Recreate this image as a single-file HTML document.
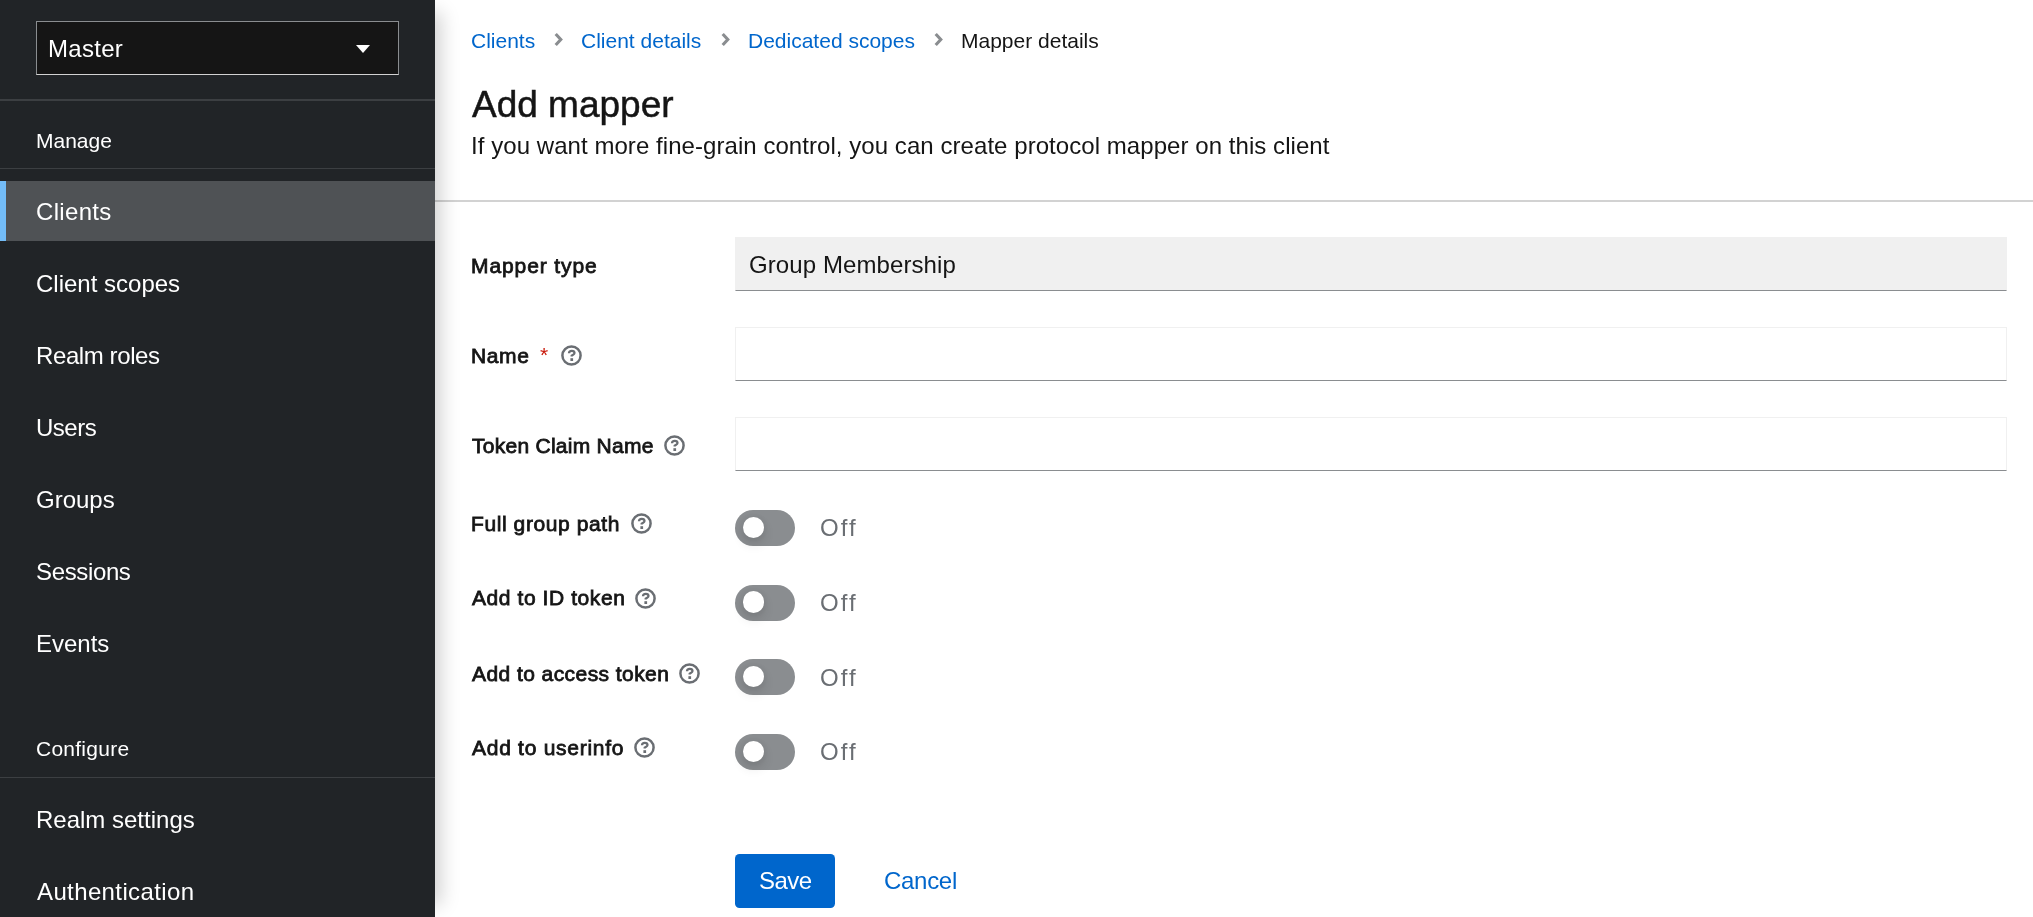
<!DOCTYPE html>
<html><head><meta charset="utf-8">
<style>
*{box-sizing:border-box;margin:0;padding:0}
html,body{width:2033px;height:917px;overflow:hidden;background:#fff;font-family:"Liberation Sans",sans-serif;color:#151515}
.t,.nav,.sec,.bc,.lbl,.off{will-change:transform}
.t{position:absolute;white-space:nowrap}
#side{position:absolute;left:0;top:0;width:435px;height:917px;background:#212427;z-index:2;box-shadow:18px 0 18px -12px rgba(3,3,3,.18)}
#realm{position:absolute;left:36px;top:21px;width:363px;height:54px;background:#151515;border:1.5px solid #8a8d90;border-bottom-color:#d2d2d2}
#caret{position:absolute;left:356px;top:45px;width:0;height:0;border-left:7px solid transparent;border-right:7px solid transparent;border-top:8px solid #fff}
.hr{position:absolute;left:0;width:435px;height:1.5px;background:#3c3f42}
.nav{position:absolute;left:36px;font-size:24px;color:#fff;line-height:24px;white-space:nowrap}
.sec{position:absolute;left:36px;font-size:21px;color:#fff;line-height:21px;white-space:nowrap}
#active{position:absolute;left:0;top:181px;width:435px;height:60px;background:#4f5255}
#active::before{content:"";position:absolute;left:0;top:0;width:6px;height:60px;background:#73bcf7}
.bc{position:absolute;top:30px;font-size:21px;color:#0066cc;line-height:21px;white-space:nowrap}
.chev{position:absolute;top:28px;width:20px;height:24px}
.lbl{position:absolute;left:471px;font-size:21px;color:#151515;line-height:21px;white-space:nowrap;-webkit-text-stroke:0.8px #151515}
.inp{position:absolute;left:735px;width:1272px;height:54px;border:1.5px solid #f0f0f0;border-bottom:1.5px solid #8a8d90;background:#fff}
.help{position:absolute;width:21px;height:21px}
.sw{position:absolute;left:735px;width:60px;height:36px;border-radius:18px;background:#8a8d90}
.sw::after{content:"";position:absolute;left:7.5px;top:6.5px;width:21.5px;height:21.5px;border-radius:50%;background:#fff;box-shadow:0 6px 12px rgba(3,3,3,.12),0 0 6px rgba(3,3,3,.06)}
.off{position:absolute;left:820px;letter-spacing:2px;font-size:24px;color:#6a6e73;line-height:24px;white-space:nowrap}
</style></head><body>
<svg width="0" height="0" style="position:absolute">
<defs>
<symbol id="q" viewBox="0 0 21 21"><circle cx="10.5" cy="10.5" r="9.1" fill="none" stroke="#6a6e73" stroke-width="2.5"/><path d="M8,8.3 C8,6.6 9.1,5.9 10.8,5.9 C12.5,5.9 13.5,6.8 13.5,8.1 C13.5,9.6 11.6,9.9 10.7,10.7 V11.6" fill="none" stroke="#6a6e73" stroke-width="2.3"/><rect x="9.4" y="13.2" width="2.7" height="2.8" fill="#6a6e73"/></symbol>
<symbol id="cv" viewBox="0 0 20 24"><path d="M5.7,6 L10.8,11.5 L5.7,17" fill="none" stroke="#8a8d90" stroke-width="3.1"/></symbol>
</defs></svg>
<div id="side">
  <div id="realm"></div>
  <div class="nav" style="left:48px;top:37px;letter-spacing:.3px">Master</div>
  <div id="caret"></div>
  <div class="hr" style="top:99px;height:2px"></div>
  <div class="sec" style="top:130px">Manage</div>
  <div class="hr" style="top:168px;height:1px"></div>
  <div id="active"></div>
  <div class="nav" style="top:200px;letter-spacing:.33px">Clients</div>
  <div class="nav" style="top:272px">Client scopes</div>
  <div class="nav" style="top:344px;letter-spacing:-.4px">Realm roles</div>
  <div class="nav" style="top:416px;letter-spacing:-.5px">Users</div>
  <div class="nav" style="top:488px">Groups</div>
  <div class="nav" style="top:560px;letter-spacing:-.36px">Sessions</div>
  <div class="nav" style="top:632px">Events</div>
  <div class="sec" style="top:738px;letter-spacing:.25px">Configure</div>
  <div class="hr" style="top:777px;height:1px"></div>
  <div class="nav" style="top:808px">Realm settings</div>
  <div class="nav" style="top:880px;left:37px;letter-spacing:.38px">Authentication</div>
</div>
<div id="main">
  <div class="bc" style="left:471px">Clients</div>
  <svg class="chev" style="left:550px"><use href="#cv"/></svg>
  <div class="bc" style="left:581px">Client details</div>
  <svg class="chev" style="left:717px"><use href="#cv"/></svg>
  <div class="bc" style="left:748px">Dedicated scopes</div>
  <svg class="chev" style="left:930px"><use href="#cv"/></svg>
  <div class="bc" style="left:961px;color:#151515">Mapper details</div>
  <div class="t" style="left:472px;top:86px;font-size:37px;line-height:37px;-webkit-text-stroke:0.5px #151515">Add mapper</div>
  <div class="t" style="left:471px;top:134px;font-size:24px;line-height:24px;letter-spacing:.057px">If you want more fine-grain control, you can create protocol mapper on this client</div>
  <div class="t" style="left:435px;top:199.5px;width:1598px;height:1.5px;background:#d2d2d2"></div>

  <div class="lbl" style="top:255px;letter-spacing:0.9px;left:471px">Mapper type</div>
  <div class="inp" style="top:237px;background:#f0f0f0;border-color:#f0f0f0;border-bottom-color:#8a8d90"></div>
  <div class="t" style="left:749px;top:253px;font-size:24px;line-height:24px;color:#151515;letter-spacing:.09px">Group Membership</div>

  <div class="lbl" style="top:345px;letter-spacing:0.6px;left:471px">Name</div>
  <div class="t" style="left:540px;top:344px;font-size:21px;line-height:21px;color:#c9190b">*</div>
  <svg class="help" style="left:561px;top:345px"><use href="#q"/></svg>
  <div class="inp" style="top:327px"></div>

  <div class="lbl" style="top:435px;letter-spacing:0.27px;left:472px">Token Claim Name</div>
  <svg class="help" style="left:664px;top:435px"><use href="#q"/></svg>
  <div class="inp" style="top:417px"></div>

  <div class="lbl" style="top:513px;letter-spacing:0.59px;left:471px">Full group path</div>
  <svg class="help" style="left:631px;top:512.5px"><use href="#q"/></svg>
  <div class="sw" style="top:510px"></div><div class="off" style="top:516px">Off</div>
  <div class="lbl" style="top:587px;letter-spacing:0.58px;left:472px">Add to ID token</div>
  <svg class="help" style="left:635px;top:588px"><use href="#q"/></svg>
  <div class="sw" style="top:584.5px"></div><div class="off" style="top:591px">Off</div>
  <div class="lbl" style="top:663px;letter-spacing:0.43px;left:472px">Add to access token</div>
  <svg class="help" style="left:679px;top:662.5px"><use href="#q"/></svg>
  <div class="sw" style="top:659px"></div><div class="off" style="top:666px">Off</div>
  <div class="lbl" style="top:737px;letter-spacing:0.73px;left:472px">Add to userinfo</div>
  <svg class="help" style="left:634px;top:736.5px"><use href="#q"/></svg>
  <div class="sw" style="top:734px"></div><div class="off" style="top:740px">Off</div>

  <div class="t" style="left:735px;top:854px;width:100px;height:54px;background:#0066cc;border-radius:4.5px"></div>
  <div class="t" style="left:759px;top:869px;font-size:24px;line-height:24px;color:#fff;letter-spacing:-.5px">Save</div>
  <div class="t" style="left:884px;top:869px;font-size:24px;line-height:24px;color:#0066cc;letter-spacing:-.3px">Cancel</div>
</div>
</body></html>
